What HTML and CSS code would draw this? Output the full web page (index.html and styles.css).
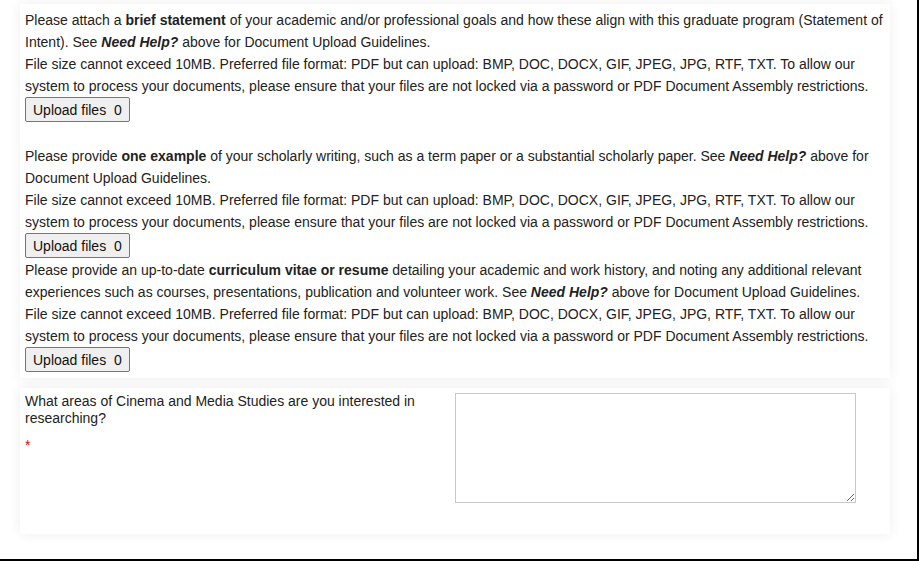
FILE: index.html
```html
<!DOCTYPE html>
<html lang="en">
<head>
<meta charset="utf-8">
<title>Application documents</title>
<link rel="stylesheet" href="styles.css">
</head>
<body>
<div class="frame">
  <section class="card uploads">
    <div class="item item-first">
      <p class="text">Please attach a <b>brief statement</b> of your academic and/or professional goals and how these align with this graduate program (Statement of Intent). See <b><i>Need Help?</i></b> above for Document Upload Guidelines.<br>File size cannot exceed 10MB. Preferred file format: PDF but can upload: BMP, DOC, DOCX, GIF, JPEG, JPG, RTF, TXT. To allow our system to process your documents, please ensure that your files are not locked via a password or PDF Document Assembly restrictions.</p>
      <button class="upload" type="button">Upload files&nbsp; 0</button>
    </div>
    <div class="item">
      <p class="text">Please provide <b>one example</b> of your scholarly writing, such as a term paper or a substantial scholarly paper. See <b><i>Need Help?</i></b> above for Document Upload Guidelines.<br>File size cannot exceed 10MB. Preferred file format: PDF but can upload: BMP, DOC, DOCX, GIF, JPEG, JPG, RTF, TXT. To allow our system to process your documents, please ensure that your files are not locked via a password or PDF Document Assembly restrictions.</p>
      <button class="upload" type="button">Upload files&nbsp; 0</button>
    </div>
    <div class="item">
      <p class="text">Please provide an up-to-date <b>curriculum vitae or resume</b> detailing your academic and work history, and noting any additional relevant experiences such as courses, presentations, publication and volunteer work. See <b><i>Need Help?</i></b> above for Document Upload Guidelines.<br>File size cannot exceed 10MB. Preferred file format: PDF but can upload: BMP, DOC, DOCX, GIF, JPEG, JPG, RTF, TXT. To allow our system to process your documents, please ensure that your files are not locked via a password or PDF Document Assembly restrictions.</p>
      <button class="upload" type="button">Upload files&nbsp; 0</button>
    </div>
  </section>
  <section class="card question">
    <div class="label-col">
      <label class="label" for="areas">What areas of Cinema and Media Studies are you interested in researching?</label>
      <span class="required">*</span>
    </div>
    <textarea id="areas" class="answer"></textarea>
  </section>
</div>
</body>
</html>
```
FILE: styles.css
```css
html, body {
  margin: 0;
  padding: 0;
  background: #fff;
}

body {
  font-family: "Liberation Sans", Arial, sans-serif;
  font-size: 14px;
  color: #222;
}

.frame {
  width: 919px;
  height: 561px;
  box-sizing: border-box;
  border-right: 2px solid #000;
  border-bottom: 2px solid #000;
  overflow: hidden;
  padding-top: 4px;
}

.card {
  margin-left: 20px;
  width: 870px;
  box-sizing: border-box;
  background: #fff;
  box-shadow: 0 0 12px rgba(0, 0, 0, 0.07);
}

.uploads {
  padding: 5px;
}

.item {
  display: flex;
  flex-direction: column;
  align-items: flex-start;
  margin-bottom: 1px;
}

.item-first {
  margin-bottom: 23px;
}

.text {
  margin: 0;
  line-height: 22px;
}

.upload {
  height: 25px;
  padding: 0 7px;
  font-family: "Liberation Sans", Arial, sans-serif;
  font-size: 14px;
  color: #111;
  background: #efefef;
  border: 1px solid #767676;
  border-radius: 2px;
  white-space: pre;
}

.question {
  margin-top: 10px;
  padding: 5px 5px 31px 5px;
  display: grid;
  grid-template-columns: 430px 401px;
  align-items: start;
}

.label-col {
  display: flex;
  flex-direction: column;
  align-items: flex-start;
}

.label {
  line-height: 17px;
  padding-right: 30px;
}

.required {
  margin-top: 10px;
  color: #e00;
  line-height: 17px;
}

.answer {
  width: 401px;
  height: 110px;
  box-sizing: border-box;
  border: 1px solid #c8c8c8;
  margin: 0;
  padding: 2px;
  font-family: "Liberation Sans", Arial, sans-serif;
  font-size: 14px;
}
```
